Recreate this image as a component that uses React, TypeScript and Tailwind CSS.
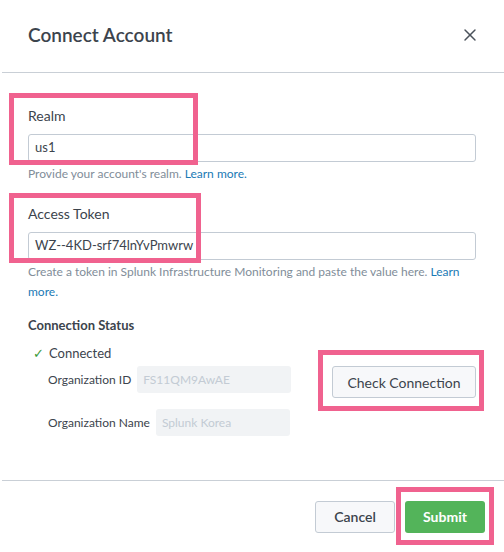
import { X } from "lucide-react";

const font = { fontFamily: "Lato, 'Open Sans', sans-serif" };

function Field({ label, value }: { label: string; value: string }) {
  return (
    <div className="flex flex-col">
      <label className="h-5 text-[14px] leading-5 text-[#3c444d]">{label}</label>
      <div className="mt-[8px] flex h-[28px] items-center rounded-[3px] border border-[#c3cbd4] bg-white px-[6px] text-[13px] text-[#3c444d]">
        {value}
      </div>
    </div>
  );
}

export default function App() {
  return (
    <div className="relative h-[552px] w-[504px] overflow-hidden bg-white" style={font}>
      {/* Header */}
      <div className="ml-[2px] flex h-[73px] items-center justify-between border-b border-[#c9cfd6] pb-[2px] pl-[26px] pr-[24px]">
        <h1 className="text-[19px] font-semibold text-[#3c444d]">Connect Account</h1>
        <X className="h-[20px] w-[20px] text-[#4a525b]" strokeWidth={1.75} />
      </div>

      {/* Body */}
      <div className="flex h-[407px] flex-col px-[28px] pt-[33px]">
        <Field label="Realm" value="us1" />
        <p className="mt-[2px] text-[12px] leading-5 text-[#818d99]">
          Provide your account's realm. <span className="text-[#1a7ab5]">Learn more.</span>
        </p>

        <div className="mt-[20px]">
          <Field label="Access Token" value="WZ--4KD-srf74lnYvPmwrw" />
        </div>
        <p className="mt-[2px] text-[12px] leading-5 text-[#818d99]">
          Create a token in Splunk Infrastructure Monitoring and paste the value here.{" "}
          <span className="text-[#1a7ab5]">Learn</span> <span className="text-[#1a7ab5]">more.</span>
        </p>

        <h2 className="mt-[13px] text-[13px] font-bold leading-5 text-[#3c444d]">Connection Status</h2>

        <div className="mt-[9px] flex items-start">
          <div className="w-[290px] pl-[5px]">
            <div className="flex h-5 items-center gap-[5px] text-[13px] text-[#3c444d]">
              <span className="text-[#3a9a3a]">✓</span>
              <span>Connected</span>
            </div>
            <div className="mt-[2px] flex items-center gap-[6px] pl-[15px]">
              <span className="text-[12px] text-[#3c444d]">Organization ID</span>
              <div className="flex h-[27px] w-[154px] items-center rounded-[3px] bg-[#f1f3f5] px-[6px] text-[12px] text-[#c3cbd4]">
                FS11QM9AwAE
              </div>
            </div>
            <div className="mt-[16px] flex items-center gap-[6px] pl-[15px]">
              <span className="text-[12px] text-[#3c444d]">Organization Name</span>
              <div className="flex h-[27px] w-[134px] items-center rounded-[3px] bg-[#f1f3f5] px-[6px] text-[12px] text-[#c3cbd4]">
                Splunk Korea
              </div>
            </div>
          </div>
          <button className="ml-[14px] mt-[22px] h-[32px] w-[144px] rounded-[3px] border border-[#c3cbd4] bg-[#f7f8fa] text-[14px] text-[#3c444d]">
            Check Connection
          </button>
        </div>
      </div>

      {/* Footer */}
      <div className="ml-[2px] flex h-[72px] items-center justify-end gap-[10px] border-t border-[#c9cfd6] pr-[19px]">
        <button className="h-[32px] w-[80px] rounded-[3px] border border-[#c3cbd4] bg-[#f7f8fa] text-[14px] font-semibold text-[#3c444d]">
          Cancel
        </button>
        <button className="h-[32px] w-[80px] rounded-[3px] bg-[#53b45a] text-[14px] font-bold text-white">
          Submit
        </button>
      </div>

      {/* Annotation boxes */}
      <div className="pointer-events-none absolute left-[9px] top-[93px] h-[72px] w-[189px] border-[5px] border-[#f0628f]" />
      <div className="pointer-events-none absolute left-[9px] top-[193px] h-[70px] w-[192px] border-[5px] border-[#f0628f]" />
      <div className="pointer-events-none absolute left-[318px] top-[350px] h-[61px] w-[166px] border-[5px] border-[#f0628f]" />
      <div className="pointer-events-none absolute left-[396px] top-[487px] h-[58px] w-[98px] border-[5px] border-[#f0628f]" />
    </div>
  );
}
